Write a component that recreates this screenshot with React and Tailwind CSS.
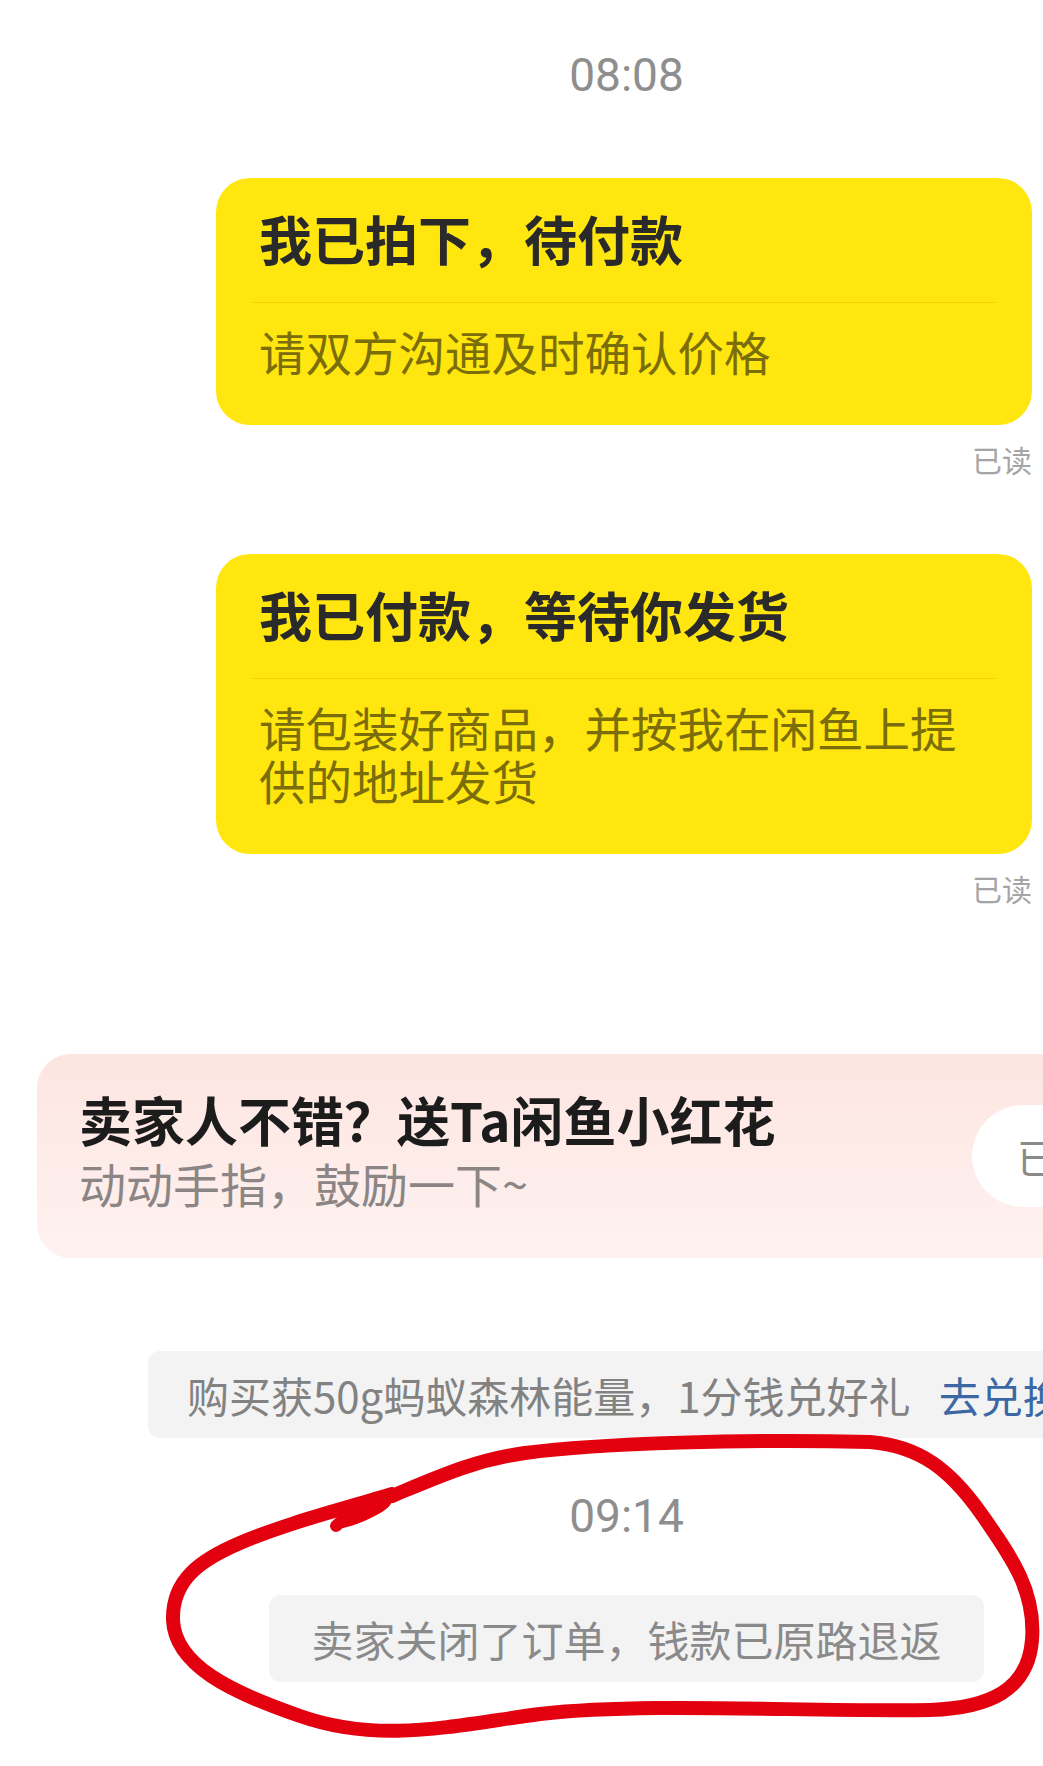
export default function App() {
  return (
    <div className="relative w-[1043px] h-[1766px] overflow-hidden bg-white font-['Noto_Sans_CJK_SC','Noto_Sans',sans-serif]">
      <div className="flex flex-col">
        <div className="pt-[47px] pl-[210px] flex justify-center text-[46px] leading-[56px] text-[#8e8e8e] font-['Roboto','Noto_Sans',sans-serif]">
          08:08
        </div>

        <div className="mt-[75px] ml-[216px] mr-[11px] rounded-[34px] bg-[#ffe60f] pt-[29px] pb-[48px]">
          <div className="px-[43px] text-[53px] leading-[62px] font-bold text-[#2a2a2a]">我已拍下，待付款</div>
          <div className="mt-[33px] mx-[36px] h-px bg-[#f0d400]"></div>
          <div className="mt-[21px] px-[43px] text-[46.5px] leading-[53px] text-[#7c6d0b]">请双方沟通及时确认价格</div>
        </div>
        <div className="mt-[16px] pr-[11px] text-right text-[30px] leading-[36px] text-[#a5a5a5]">已读</div>

        <div className="mt-[77px] ml-[216px] mr-[11px] rounded-[34px] bg-[#ffe60f] pt-[29px] pb-[48px]">
          <div className="px-[43px] text-[53px] leading-[62px] font-bold text-[#2a2a2a]">我已付款，等待你发货</div>
          <div className="mt-[33px] mx-[36px] h-px bg-[#f0d400]"></div>
          <div className="mt-[21px] px-[43px] text-[46.5px] leading-[53px] text-[#7c6d0b]">请包装好商品，并按我在闲鱼上提供的地址发货</div>
        </div>
        <div className="mt-[16px] pr-[11px] text-right text-[30px] leading-[36px] text-[#a5a5a5]">已读</div>

        <div className="mt-[148px] ml-[37px] w-[1150px] h-[204px] shrink-0 rounded-[34px] bg-gradient-to-b from-[#fde5e1] to-[#fef2f0] flex items-center">
          <div className="w-[935px] shrink-0 self-start pt-[36px] pl-[42px] flex flex-col">
            <div className="text-[53px] leading-[58px] font-bold text-[#1c1c1c] whitespace-nowrap">卖家人不错？送Ta闲鱼小红花</div>
            <div className="mt-[8px] text-[47px] leading-[54px] text-[#8c8585] whitespace-nowrap">动动手指，鼓励一下~</div>
          </div>
          <div className="shrink-0 w-[200px] h-[102px] rounded-full bg-white flex items-center pl-[45px] text-[40px] text-[#8a8a8a] whitespace-nowrap">
            已送出
          </div>
        </div>

        <div className="mt-[93px] ml-[148px] w-[1000px] h-[87px] shrink-0 rounded-[12px] bg-[#f3f3f4] flex items-center pl-[39px] whitespace-nowrap text-[42px] text-[#828282]">
          购买获50g蚂蚁森林能量，1分钱兑好礼
          <span className="ml-[28px] text-[#3b68a5]">去兑换</span>
        </div>

        <div className="mt-[50px] pl-[210px] flex justify-center text-[46px] leading-[56px] text-[#8e8e8e] font-['Roboto','Noto_Sans',sans-serif]">
          09:14
        </div>

        <div className="mt-[51px] pl-[210px] flex justify-center">
          <div className="h-[87px] rounded-[12px] bg-[#f3f3f4] px-[42px] flex items-center text-[42px] text-[#8a8a8a] whitespace-nowrap">
            卖家关闭了订单，钱款已原路退返
          </div>
        </div>
      </div>

      <svg
        className="absolute inset-0 pointer-events-none"
        width="1043"
        height="1766"
        viewBox="0 0 1043 1766"
        fill="none"
      >
        <path
          d="M 392 1496 C 440 1476 475 1460 525 1453 C 600 1443 750 1439 870 1442 C 920 1446 950 1470 980 1512 C 1010 1555 1036 1590 1032 1640 C 1028 1690 990 1708 930 1710 C 800 1712 650 1702 540 1714 C 450 1726 380 1744 300 1716 C 230 1692 175 1665 173 1620 C 172 1580 200 1560 240 1543 C 290 1522 340 1510 392 1494"
          stroke="#e3000f"
          strokeWidth="14"
          strokeLinecap="round"
          strokeLinejoin="round"
        />
        <path
          d="M 336 1526 C 350 1512 380 1494 386 1497 C 392 1502 362 1518 342 1522"
          stroke="#e3000f"
          strokeWidth="12"
          strokeLinecap="round"
          strokeLinejoin="round"
        />
      </svg>
    </div>
  );
}
